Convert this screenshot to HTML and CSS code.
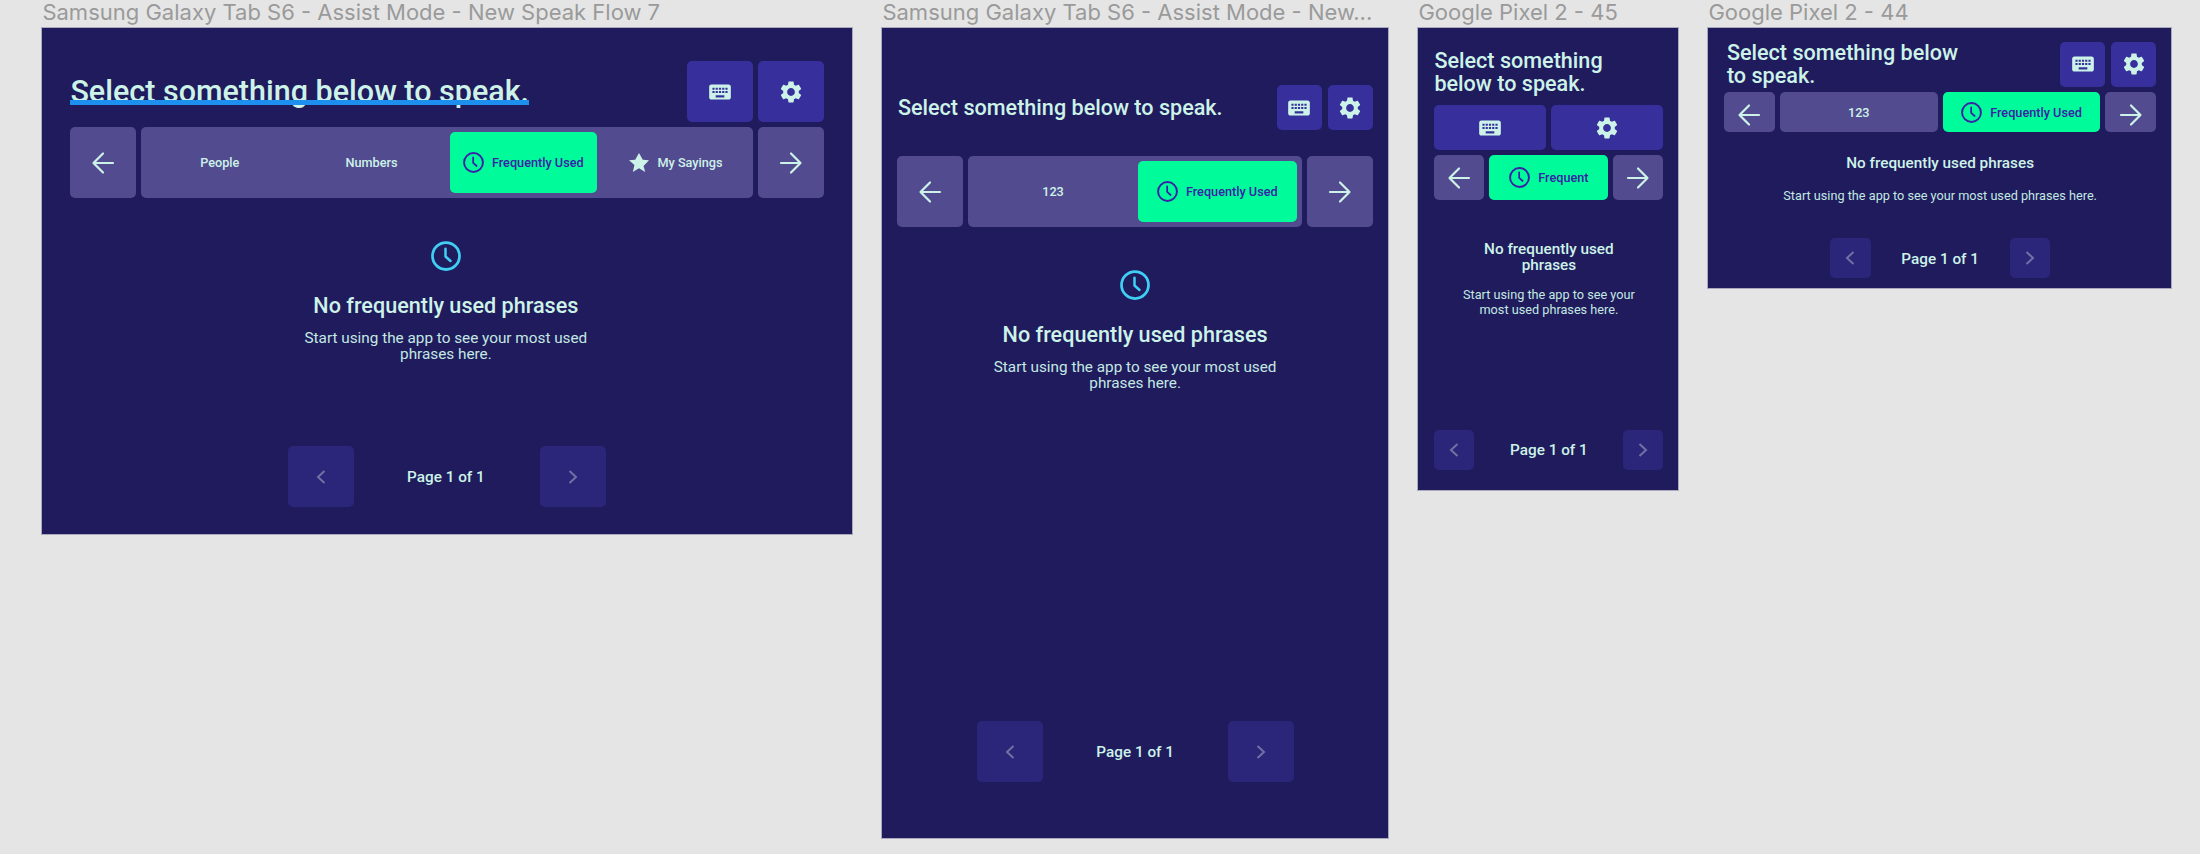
FILE: index.html
```html
<!DOCTYPE html>
<html lang="en">
  <head>
    <meta charset="UTF-8" />
    <title>Assist Mode - Speak Flow</title>
    <link rel="stylesheet" href="styles.css">
  </head>
  <body>
    <svg class="sprite" xmlns="http://www.w3.org/2000/svg">
      <symbol id="i-keyboard" viewBox="0 0 24 24">
        <path d="M20 5H4c-1.1 0-1.99.9-1.99 2L2 17c0 1.1.9 2 2 2h16c1.1 0 2-.9 2-2V7c0-1.1-.9-2-2-2zm-9 3h2v2h-2V8zm0 3h2v2h-2v-2zM8 8h2v2H8V8zm0 3h2v2H8v-2zm-1 2H5v-2h2v2zm0-3H5V8h2v2zm9 7H8v-2h8v2zm0-4h-2v-2h2v2zm0-3h-2V8h2v2zm3 3h-2v-2h2v2zm0-3h-2V8h2v2z" fill="currentColor" />
      </symbol>
      <symbol id="i-gear" viewBox="0 0 24 24">
        <path d="M19.14 12.94c.04-.3.06-.61.06-.94 0-.32-.02-.64-.07-.94l2.03-1.58c.18-.14.23-.41.12-.61l-1.92-3.32c-.12-.22-.37-.29-.59-.22l-2.39.96c-.5-.38-1.03-.7-1.62-.94l-.36-2.54c-.04-.24-.24-.41-.48-.41h-3.84c-.24 0-.43.17-.47.41l-.36 2.54c-.59.24-1.13.57-1.62.94l-2.39-.96c-.22-.08-.47 0-.59.22L2.74 8.87c-.12.21-.08.47.12.61l2.03 1.58c-.05.3-.09.63-.09.94s.02.64.07.94l-2.03 1.58c-.18.14-.23.41-.12.61l1.92 3.32c.12.22.37.29.59.22l2.39-.96c.5.38 1.03.7 1.62.94l.36 2.54c.05.24.24.41.48.41h3.84c.24 0 .44-.17.47-.41l.36-2.54c.59-.24 1.13-.56 1.62-.94l2.39.96c.22.08.47 0 .59-.22l1.92-3.32c.12-.22.07-.47-.12-.61l-2.01-1.58zM12 15.6c-1.98 0-3.6-1.62-3.6-3.6s1.62-3.6 3.6-3.6 3.6 1.62 3.6 3.6-1.62 3.6-3.6 3.6z" fill="currentColor" />
      </symbol>
      <symbol id="i-left" viewBox="0 0 24 24">
        <path d="M22 12H2.500M12 2.500L2.500 12l9.500 9.500" fill="none" stroke="currentColor" stroke-width="2.200" stroke-linecap="round" stroke-linejoin="round" />
      </symbol>
      <symbol id="i-right" viewBox="0 0 24 24">
        <path d="M2 12h19.500M12 2.500l9.500 9.500-9.500 9.500" fill="none" stroke="currentColor" stroke-width="2.200" stroke-linecap="round" stroke-linejoin="round" />
      </symbol>
      <symbol id="i-clock" viewBox="0 0 24 24">
        <circle cx="12" cy="12" r="10.800" fill="none" stroke="currentColor" stroke-width="2.200" />
        <path d="M11.600 6.200v6.200l4 3.600" fill="none" stroke="currentColor" stroke-width="2" stroke-linecap="round" stroke-linejoin="round" />
      </symbol>
      <symbol id="i-star" viewBox="0 0 24 24">
        <path d="M12 17.270L18.180 21l-1.640-6.030L22 9.240l-6.190-.53L12 2 8.190 8.710 2 9.240l5.460 4.730L5.820 21z" fill="currentColor" />
      </symbol>
      <symbol id="i-prev" viewBox="0 0 10 14">
        <path d="M8.500 1L2 7l6.500 6" fill="none" stroke="currentColor" stroke-width="2" />
      </symbol>
      <symbol id="i-next" viewBox="0 0 10 14">
        <path d="M1.500 1L8 7l-6.500 6" fill="none" stroke="currentColor" stroke-width="2" />
      </symbol>
    </svg>

    <main class="canvas">
      <!-- tablet landscape -->
      <section class="device tablet-wide">
        <p class="device-name">Samsung Galaxy Tab S6 - Assist Mode - New Speak Flow 7</p>
        <div class="frame">
          <header class="top">
            <h1 class="title title-marked">Select something below to speak.</h1>
            <div class="tools">
              <button class="tool"><svg class="icon-tool"><use href="#i-keyboard" /></svg></button>
              <button class="tool"><svg class="icon-tool"><use href="#i-gear" /></svg></button>
            </div>
          </header>
          <nav class="tabs">
            <button class="arrow"><svg class="icon-arrow"><use href="#i-left" /></svg></button>
            <div class="tab-group">
              <button class="tab">People</button>
              <button class="tab">Numbers</button>
              <button class="tab tab-on"><svg class="icon-tab"><use href="#i-clock" /></svg>Frequently Used</button>
              <button class="tab"><svg class="icon-star"><use href="#i-star" /></svg>My Sayings</button>
            </div>
            <button class="arrow"><svg class="icon-arrow"><use href="#i-right" /></svg></button>
          </nav>
          <div class="empty">
            <svg class="icon-empty"><use href="#i-clock" /></svg>
            <h2 class="empty-title">No frequently used phrases</h2>
            <p class="empty-text">Start using the app to see your most used phrases here.</p>
          </div>
          <div class="pager">
            <button class="page-btn"><svg class="icon-page"><use href="#i-prev" /></svg></button>
            <span class="page-label">Page 1 of 1</span>
            <button class="page-btn"><svg class="icon-page"><use href="#i-next" /></svg></button>
          </div>
        </div>
      </section>

      <!-- tablet portrait -->
      <section class="device tablet-tall">
        <p class="device-name">Samsung Galaxy Tab S6 - Assist Mode - New...</p>
        <div class="frame">
          <header class="top">
            <h1 class="title">Select something below to speak.</h1>
            <div class="tools">
              <button class="tool"><svg class="icon-tool"><use href="#i-keyboard" /></svg></button>
              <button class="tool"><svg class="icon-tool"><use href="#i-gear" /></svg></button>
            </div>
          </header>
          <nav class="tabs">
            <button class="arrow"><svg class="icon-arrow"><use href="#i-left" /></svg></button>
            <div class="tab-group">
              <button class="tab">123</button>
              <button class="tab tab-on"><svg class="icon-tab"><use href="#i-clock" /></svg>Frequently Used</button>
            </div>
            <button class="arrow"><svg class="icon-arrow"><use href="#i-right" /></svg></button>
          </nav>
          <div class="empty">
            <svg class="icon-empty"><use href="#i-clock" /></svg>
            <h2 class="empty-title">No frequently used phrases</h2>
            <p class="empty-text">Start using the app to see your most used phrases here.</p>
          </div>
          <div class="pager">
            <button class="page-btn"><svg class="icon-page"><use href="#i-prev" /></svg></button>
            <span class="page-label">Page 1 of 1</span>
            <button class="page-btn"><svg class="icon-page"><use href="#i-next" /></svg></button>
          </div>
        </div>
      </section>

      <!-- phone portrait -->
      <section class="device phone-tall">
        <p class="device-name">Google Pixel 2 - 45</p>
        <div class="frame">
          <header class="top">
            <h1 class="title">Select something below to speak.</h1>
            <div class="tools">
              <button class="tool"><svg class="icon-tool"><use href="#i-keyboard" /></svg></button>
              <button class="tool"><svg class="icon-tool"><use href="#i-gear" /></svg></button>
            </div>
          </header>
          <nav class="tabs">
            <button class="arrow"><svg class="icon-arrow"><use href="#i-left" /></svg></button>
            <button class="tab tab-on"><svg class="icon-tab"><use href="#i-clock" /></svg>Frequent</button>
            <button class="arrow"><svg class="icon-arrow"><use href="#i-right" /></svg></button>
          </nav>
          <div class="empty">
            <h2 class="empty-title">No frequently used phrases</h2>
            <p class="empty-text">Start using the app to see your most used phrases here.</p>
          </div>
          <div class="pager">
            <button class="page-btn"><svg class="icon-page"><use href="#i-prev" /></svg></button>
            <span class="page-label">Page 1 of 1</span>
            <button class="page-btn"><svg class="icon-page"><use href="#i-next" /></svg></button>
          </div>
        </div>
      </section>

      <!-- phone landscape -->
      <section class="device phone-wide">
        <p class="device-name">Google Pixel 2 - 44</p>
        <div class="frame">
          <header class="top">
            <h1 class="title">Select something below to speak.</h1>
            <div class="tools">
              <button class="tool"><svg class="icon-tool"><use href="#i-keyboard" /></svg></button>
              <button class="tool"><svg class="icon-tool"><use href="#i-gear" /></svg></button>
            </div>
          </header>
          <nav class="tabs">
            <button class="arrow"><svg class="icon-arrow"><use href="#i-left" /></svg></button>
            <div class="tab-group">
              <button class="tab tab-plain">123</button>
              <button class="tab tab-on"><svg class="icon-tab"><use href="#i-clock" /></svg>Frequently Used</button>
            </div>
            <button class="arrow"><svg class="icon-arrow"><use href="#i-right" /></svg></button>
          </nav>
          <div class="empty">
            <h2 class="empty-title">No frequently used phrases</h2>
            <p class="empty-text">Start using the app to see your most used phrases here.</p>
          </div>
          <div class="pager">
            <button class="page-btn"><svg class="icon-page"><use href="#i-prev" /></svg></button>
            <span class="page-label">Page 1 of 1</span>
            <button class="page-btn"><svg class="icon-page"><use href="#i-next" /></svg></button>
          </div>
        </div>
      </section>
    </main>
  </body>
</html>
```

FILE: styles.css
```css
* {
  margin: 0;
  box-sizing: border-box;
}

html,
body {
  height: 100%;
}

body {
  background: #e5e5e5;
  font-family: Roboto, "Liberation Sans", sans-serif;
  color: #cdf3e9;
  overflow: hidden;
}

button {
  border: 0;
  padding: 0;
  font: inherit;
  color: inherit;
  display: flex;
  align-items: center;
  justify-content: center;
}

svg {
  display: block;
  flex: none;
}

.sprite {
  display: none;
}

.canvas {
  display: flex;
  align-items: flex-start;
  gap: 30px;
  padding-left: 42.400px;
}

.device {
  flex: none;
}

.device-name {
  height: 28px;
  font-family: Inter, sans-serif;
  font-size: 22px;
  line-height: 24px;
  color: #9a9a9a;
  white-space: nowrap;
}

.frame {
  display: flex;
  flex-direction: column;
  background: #1f1b5d;
  box-shadow: 0 0 0 1px rgba(31, 27, 93, 0.3);
}

/* top row */
.top {
  display: flex;
  align-items: center;
  justify-content: space-between;
}

.title {
  font-size: 21.600px;
  font-weight: 500;
  line-height: 23px;
}

.tools {
  display: flex;
  gap: 6px;
}

.tool {
  width: 45px;
  height: 45px;
  border-radius: 5px;
  background: #37309c;
}

.icon-tool {
  width: 26px;
  height: 26px;
}

/* tab row */
.tabs {
  display: flex;
  gap: 5px;
}

.arrow {
  flex: none;
  width: 66px;
  border-radius: 5px;
  background: #534b8f;
}

.icon-arrow {
  width: 24px;
  height: 24px;
}

.tab-group {
  flex: 1;
  display: flex;
  gap: 5px;
  padding: 5px;
  border-radius: 5px;
  background: #534b8f;
}

.tab {
  flex: 1;
  gap: 8px;
  border-radius: 5px;
  background: transparent;
  font-size: 12.700px;
  font-weight: 500;
}

.tab-on {
  background: #00fc9a;
  color: #3a20a6;
}

.icon-tab {
  width: 21px;
  height: 21px;
}

.icon-star {
  width: 24px;
  height: 24px;
  margin-right: -2px;
}

/* empty state */
.empty {
  display: flex;
  flex-direction: column;
  align-items: center;
  text-align: center;
}

.icon-empty {
  width: 30px;
  height: 30px;
  color: #3fcff4;
}

.empty-title {
  margin-top: 22px;
  font-size: 21.600px;
  font-weight: 500;
  line-height: 24px;
}

.empty-text {
  width: 290px;
  margin-top: 13px;
  font-size: 15.300px;
  line-height: 15.500px;
  color: #c4e8e2;
}

/* pager */
.pager {
  display: flex;
  align-items: center;
  justify-content: space-between;
  margin: auto auto 0;
}

.page-btn {
  width: 66px;
  height: 61px;
  border-radius: 5px;
  background: #2c267b;
  color: #6f72a2;
}

.icon-page {
  width: 10px;
  height: 14px;
}

.page-label {
  padding-top: 1px;
  font-size: 15.300px;
  font-weight: 500;
}

/* tablet landscape */
.tablet-wide .frame {
  width: 810px;
  height: 506px;
  padding: 33px 28px 27px;
}

.tablet-wide .top {
  gap: 5px;
}

.tablet-wide .title {
  font-size: 30.500px;
  line-height: 36px;
}

.tablet-wide .tools {
  gap: 5px;
}

.tablet-wide .tool {
  width: 66px;
  height: 61px;
}

.title-marked {
  position: relative;
}

.title-marked::after {
  content: "";
  position: absolute;
  left: 0;
  right: 0;
  bottom: 5px;
  height: 5px;
  background: #1d8fee;
}

.tablet-wide .tabs {
  height: 71px;
  margin-top: 5px;
}

.tablet-wide .empty {
  margin: 43px 3px 0 0;
}

.tablet-wide .empty-title {
  margin-top: 23px;
}

.tablet-wide .pager {
  width: 318px;
}

.tablet-wide .page-label {
  padding-right: 3px;
}

/* tablet portrait */
.tablet-tall .frame {
  width: 506px;
  height: 810px;
  padding: 57px 15.500px 56px 15px;
}

.tablet-tall .title {
  padding-left: 0.500px;
}

.tablet-tall .tabs {
  height: 71px;
  margin-top: 26px;
}

.tablet-tall .empty {
  margin-top: 43px;
}

.tablet-tall .empty-title {
  margin-top: 23px;
}

.tablet-tall .pager {
  width: 317px;
}

/* phone portrait */
.phone-tall .frame {
  width: 260px;
  height: 462px;
  padding: 21px 15px 20px 16px;
}

.phone-tall .top {
  flex-direction: column;
  align-items: stretch;
  gap: 10px;
}

.phone-tall .title {
  width: 200px;
}

.phone-tall .tool {
  flex: 1;
}

.phone-tall .tools {
  gap: 5px;
}

.phone-tall .tabs {
  height: 45px;
  margin-top: 5px;
}

.phone-tall .arrow {
  width: 50px;
}

.phone-tall .empty {
  margin-top: 42px;
}

.phone-tall .empty-title {
  margin-top: 0;
  width: 170px;
  font-size: 15.300px;
  line-height: 15.500px;
}

.phone-tall .empty-text {
  width: 190px;
  margin-top: 14px;
  font-size: 12.700px;
  line-height: 15px;
}

.phone-tall .pager {
  width: 100%;
}

.phone-tall .page-btn {
  width: 40px;
  height: 40px;
}

.phone-tall .page-label {
  padding-top: 0;
}

/* phone landscape */
.phone-wide .frame {
  width: 463px;
  height: 260px;
  padding: 13px 15px 10px 15.500px;
}

.phone-wide .title {
  width: 250px;
  padding-left: 3px;
}

.phone-wide .tabs {
  height: 40px;
  margin-top: 5px;
}

.phone-wide .arrow {
  width: 51px;
  padding-top: 5px;
}

.phone-wide .tab-group {
  padding: 0;
  background: transparent;
}

.tab-plain {
  background: #534b8f;
}

.phone-wide .empty {
  margin-top: 23px;
}

.phone-wide .empty-title {
  margin-top: 0;
  font-size: 15.300px;
  line-height: 16px;
}

.phone-wide .empty-text {
  width: auto;
  margin-top: 17px;
  font-size: 12.700px;
  line-height: 15px;
}

.phone-wide .pager {
  width: 220px;
}

.phone-wide .page-btn {
  width: 40.500px;
  height: 40px;
}
```
